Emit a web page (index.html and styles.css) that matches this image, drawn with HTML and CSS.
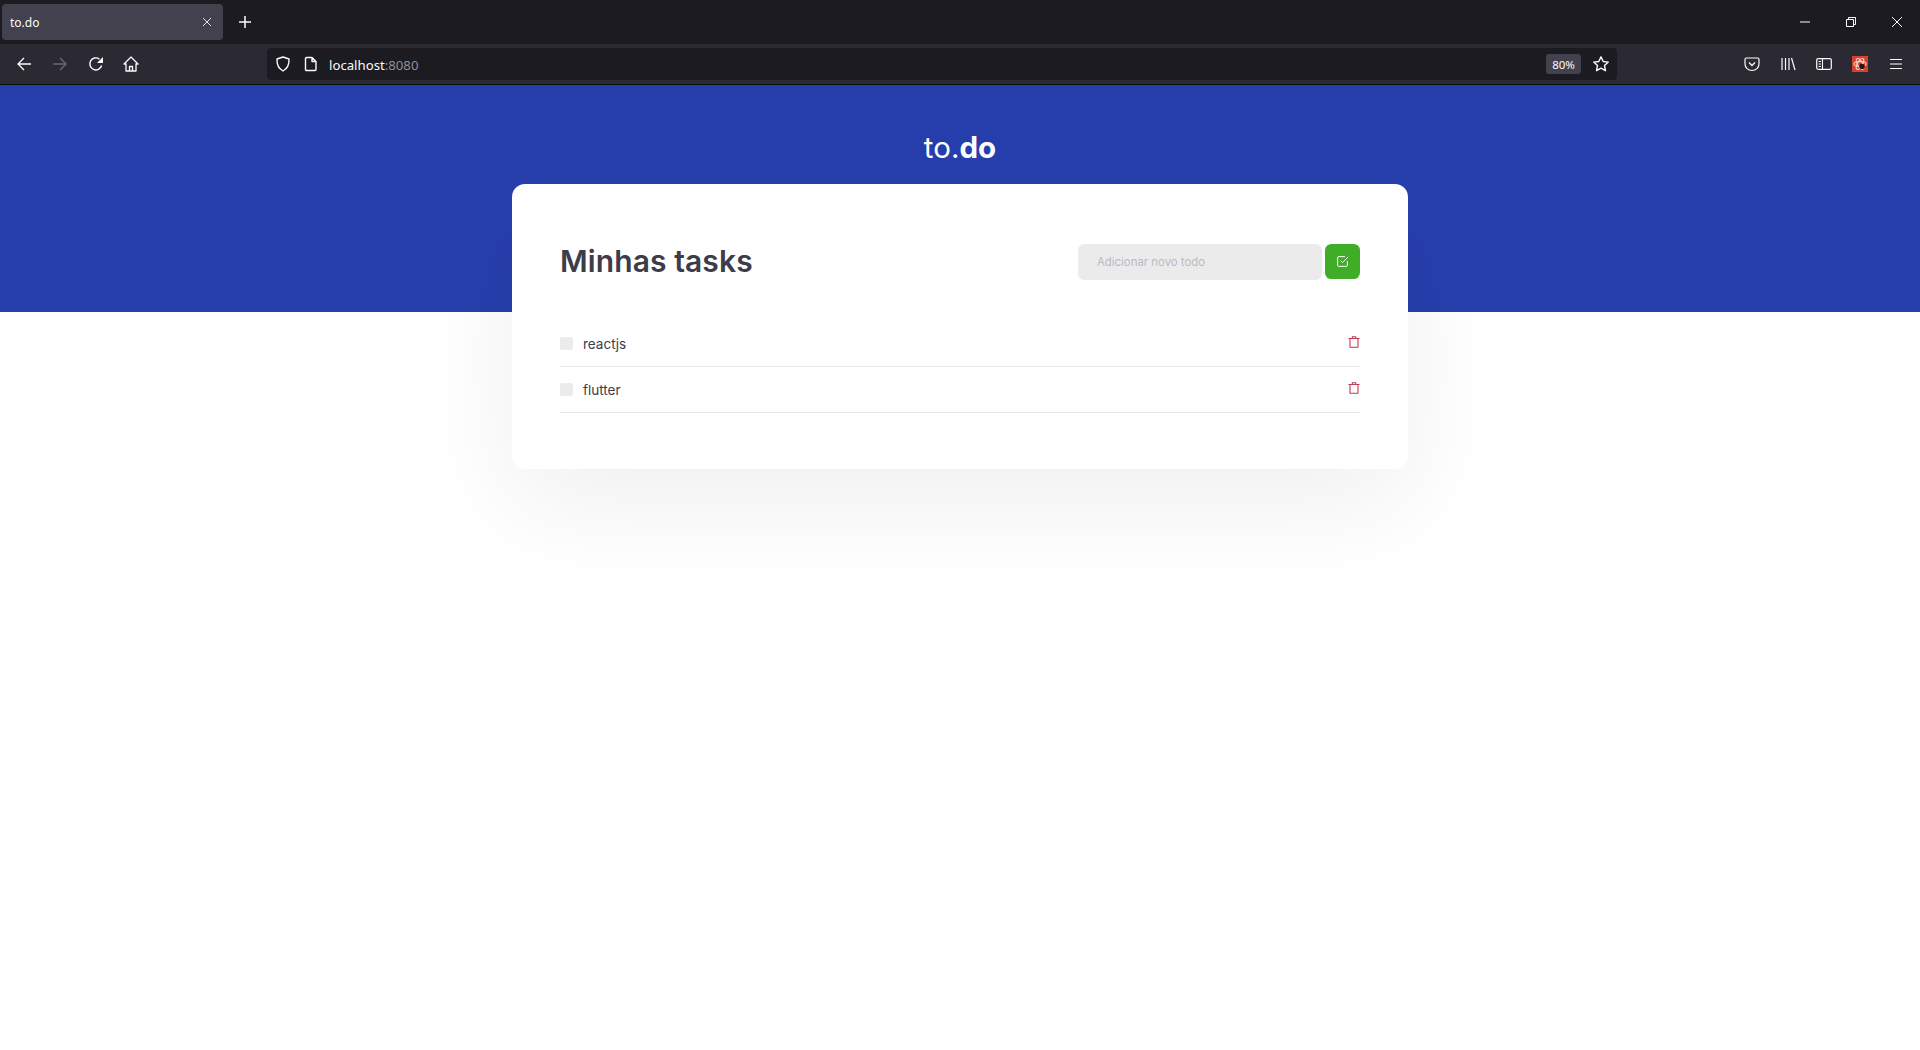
FILE: index.html
```html
<!DOCTYPE html>
<html lang="pt">
<head>
<meta charset="utf-8">
<title>to.do</title>
<link rel="stylesheet" href="styles.css">
</head>
<body>
<div class="tabbar">
  <div class="tab">
    <span class="tab-title">to.do</span>
    <svg class="ic tab-close" width="12" height="12" viewBox="0 0 12 12"><path d="M2 2l8 8M10 2l-8 8" stroke="#e4e4e8" stroke-width="1"/></svg>
  </div>
  <svg class="ic new-tab" width="14" height="14" viewBox="0 0 14 14"><path d="M7 1v12M1 7h12" stroke="#fbfbfe" stroke-width="1.5"/></svg>
  <div class="window-controls">
    <svg class="ic" width="12" height="12" viewBox="0 0 12 12"><path d="M1 6h10" stroke="#fbfbfe" stroke-width="1"/></svg>
    <svg class="ic" width="12" height="12" viewBox="0 0 12 12"><path d="M1.5 3.5h7v7h-7zM3.5 3.5v-2h7v7h-2" fill="none" stroke="#fbfbfe" stroke-width="1"/></svg>
    <svg class="ic" width="12" height="12" viewBox="0 0 12 12"><path d="M1 1l10 10M11 1L1 11" stroke="#fbfbfe" stroke-width="1"/></svg>
  </div>
</div>
<div class="toolbar">
  <div class="nav">
    <svg class="ic" width="16" height="16" viewBox="0 0 16 16"><path d="M15 8H2M8 2L2 8l6 6" fill="none" stroke="#fbfbfe" stroke-width="1.3"/></svg>
    <svg class="ic" width="16" height="16" viewBox="0 0 16 16"><path d="M1 8h13M8 2l6 6-6 6" fill="none" stroke="#6b6a72" stroke-width="1.3"/></svg>
    <svg class="ic" width="16" height="16" viewBox="0 0 16 16"><path d="M13.6 9.5A6 6 0 1 1 11.5 3.2" fill="none" stroke="#fbfbfe" stroke-width="1.4"/><path d="M15 1v6H9z" fill="#fbfbfe"/></svg>
    <svg class="ic home-ic" width="16" height="16" viewBox="0 0 16 16"><path d="M1 8l7-7 7 7h-2v7H3V8zM6.5 15v-4.500h3V15" fill="none" stroke="#fbfbfe" stroke-width="1.300" stroke-linejoin="round"/></svg>
  </div>
  <div class="urlbar">
    <svg class="ic" width="16" height="16" viewBox="0 0 16 16"><path d="M8 1l6 2c.300 5.500-1.500 9.500-6 12C3.500 12.500 1.700 8.500 2 3z" fill="none" stroke="#fbfbfe" stroke-width="1.400" stroke-linejoin="round"/></svg>
    <svg class="ic page-ic" width="14" height="16" viewBox="0 0 14 16"><path d="M2.500 1.500h5.500l4 4v8a1 1 0 0 1-1 1h-8.500a1 1 0 0 1-1-1v-11a1 1 0 0 1 1-1zM8 1.500v4h4" fill="none" stroke="#fbfbfe" stroke-width="1.400" stroke-linejoin="round"/></svg>
    <span class="url">localhost<span class="url-dim">:8080</span></span>
    <span class="zoom-badge">80%</span>
    <svg class="ic star" width="18" height="18" viewBox="0 0 18 18"><path d="M9 1.800l2.200 4.700 5.100.6-3.800 3.500 1 5.100L9 13.200l-4.500 2.500 1-5.100L1.700 7.100l5.100-.6z" fill="none" stroke="#fbfbfe" stroke-width="1.400" stroke-linejoin="round"/></svg>
  </div>
  <div class="tools">
    <svg class="ic" width="16" height="16" viewBox="0 0 16 16"><path d="M2.500 2h11A1.500 1.500 0 0 1 15 3.500V8A7 6.500 0 0 1 1 8V3.500A1.500 1.500 0 0 1 2.500 2z" fill="none" stroke="#fbfbfe" stroke-width="1.200"/><path d="M5 6.500l3 3 3-3" fill="none" stroke="#fbfbfe" stroke-width="1.300"/></svg>
    <svg class="ic" width="16" height="16" viewBox="0 0 16 16"><path d="M2 2v12M5.500 2v12M9 2v12M11.500 2l3.500 12" fill="none" stroke="#fbfbfe" stroke-width="1.200"/></svg>
    <svg class="ic" width="16" height="16" viewBox="0 0 16 16"><rect x="0.700" y="2.700" width="14.600" height="10.600" rx="1.500" fill="none" stroke="#fbfbfe" stroke-width="1.200"/><path d="M6.500 3v10M2.500 5.500h2.500M2.500 8h2.500M2.500 10.500h2.500" fill="none" stroke="#fbfbfe" stroke-width="1.100"/></svg>
    <svg class="ic" width="16" height="16" viewBox="0 0 16 16"><rect width="16" height="16" fill="#d9412e"/><g fill="none" stroke="#f6d9d2" stroke-width="1.100"><ellipse cx="8" cy="8" rx="6" ry="2.500"/><ellipse cx="8" cy="8" rx="6" ry="2.500" transform="rotate(60 8 8)"/><ellipse cx="8" cy="8" rx="6" ry="2.500" transform="rotate(120 8 8)"/></g><circle cx="10" cy="10.500" r="2.800" fill="#2b1512"/></svg>
    <svg class="ic" width="16" height="16" viewBox="0 0 16 16"><path d="M2 3.500h12M2 8h12M2 12.500h12" stroke="#fbfbfe" stroke-width="1.200"/></svg>
  </div>
</div>
<header class="hero">
  <h1 class="logo">to.<strong>do</strong></h1>
</header>
<main class="card">
  <div class="card-head">
    <h2 class="card-title">Minhas tasks</h2>
    <div class="add-form">
      <input class="add-input" type="text" placeholder="Adicionar novo todo">
      <button class="add-btn" type="button" aria-label="Adicionar">
        <svg class="ic" width="13" height="13" viewBox="0 0 24 24" fill="none" stroke="#fff" stroke-width="1.800" stroke-linecap="round" stroke-linejoin="round"><path d="M9 11l3 3L22 4"/><path d="M21 12v7a2 2 0 0 1-2 2H5a2 2 0 0 1-2-2V5a2 2 0 0 1 2-2h11"/></svg>
      </button>
    </div>
  </div>
  <ul class="task-list">
    <li class="task">
      <span class="check"></span>
      <span class="task-name">reactjs</span>
      <svg class="ic trash" width="12" height="12" viewBox="0 0 12 12" fill="none" stroke="#bf3a55" stroke-width="1.100"><path d="M0.500 2.500h11M2 2.500v8.800h8V2.500M4.300 2.500V0.700h3.400v1.800"/></svg>
    </li>
    <li class="task">
      <span class="check"></span>
      <span class="task-name">flutter</span>
      <svg class="ic trash" width="12" height="12" viewBox="0 0 12 12" fill="none" stroke="#bf3a55" stroke-width="1.100"><path d="M0.500 2.500h11M2 2.500v8.800h8V2.500M4.300 2.500V0.700h3.400v1.800"/></svg>
    </li>
  </ul>
</main>
</body>
</html>
```
FILE: styles.css
```css
* { box-sizing: border-box; }
html, body { margin: 0; padding: 0; }
body {
  height: 1050px;
  overflow: hidden;
  background: #fff;
  font-family: "Inter", "Noto Sans", sans-serif;
}
.ic { display: block; flex: none; }

.tabbar {
  height: 44px;
  background: #1c1b22;
  display: flex;
  align-items: center;
  padding-left: 2px;
}
.tab {
  width: 221px;
  height: 36px;
  background: #42414d;
  border-radius: 4px;
  display: flex;
  align-items: center;
  justify-content: space-between;
  padding: 0 10px 0 8px;
}
.tab-title {
  font: 12px "Noto Sans", sans-serif;
  color: #fbfbfe;
}
.new-tab { margin-left: 15px; }
.window-controls {
  margin-left: auto;
  display: flex;
  gap: 34px;
  padding-right: 17px;
}

.toolbar {
  height: 41px;
  background: #2b2a33;
  border-bottom: 1px solid #0c0c0d;
  display: flex;
  align-items: center;
  padding-left: 16px;
}
.nav {
  display: flex;
  gap: 20px;
  width: 251px;
  flex: none;
}
.home-ic { margin-left: -1px; }
.urlbar {
  width: 1350px;
  height: 32px;
  flex: none;
  background: #1c1b22;
  border-radius: 4px;
  display: flex;
  align-items: center;
  padding: 0 8px;
}
.page-ic { margin-left: 13px; }
.url {
  margin-left: 11px;
  padding-top: 2px;
  font: 13.200px "Noto Sans", sans-serif;
  color: #fbfbfe;
}
.url-dim { color: #8f8f96; }
.zoom-badge {
  margin-left: auto;
  width: 35px;
  height: 20px;
  background: #42414d;
  border-radius: 3px;
  color: #fbfbfe;
  font: 11.500px/21px "Noto Sans", sans-serif;
  text-align: center;
}
.star { margin: 0 -1px 0 11px; }
.tools {
  display: flex;
  gap: 20px;
  margin-left: 127px;
}

.hero {
  height: 227px;
  background: #273fad;
  padding-top: 44px;
}
.logo {
  margin: 0;
  text-align: center;
  color: #fff;
  font-size: 29.500px;
  line-height: 36px;
  font-weight: 400;
}
.logo strong { font-weight: 700; }

.card {
  width: 896px;
  height: 285px;
  margin: -128px auto 0;
  padding: 60px 48px 0;
  position: relative;
  background: #fff;
  border-radius: 13px;
  box-shadow: 0 32px 110px rgba(0, 0, 0, .065);
}
.card-head {
  display: flex;
  align-items: flex-start;
  justify-content: space-between;
}
.card-title {
  margin: 0;
  height: 36px;
  font-size: 30px;
  line-height: 35px;
  font-weight: 600;
  letter-spacing: .1px;
  color: #3d3c4a;
}
.add-form { display: flex; gap: 3px; }
.add-input {
  width: 244px;
  height: 36px;
  border: 0;
  border-radius: 6.400px;
  background: #ebebeb;
  padding: 0 19px;
  font: 11.400px "Inter", sans-serif;
  outline: none;
}
.add-input::placeholder { color: #b9b9c4; opacity: 1; }
.add-btn {
  width: 35px;
  height: 35px;
  border: 0;
  border-radius: 6.400px;
  background: #3fad27;
  padding: 0;
  display: flex;
  align-items: center;
  justify-content: center;
}

.task-list {
  list-style: none;
  margin: 41px 0 0;
  padding: 0;
}
.task {
  height: 46px;
  border-bottom: 1px solid #e8e8ea;
  display: flex;
  align-items: center;
}
.check {
  width: 13px;
  height: 13px;
  border-radius: 2px;
  background: #ebebeb;
}
.task-name {
  margin-left: 10px;
  font-size: 13.500px;
  color: #3d3c4a;
}
.trash { margin: -3px 0 0 auto; }
```
